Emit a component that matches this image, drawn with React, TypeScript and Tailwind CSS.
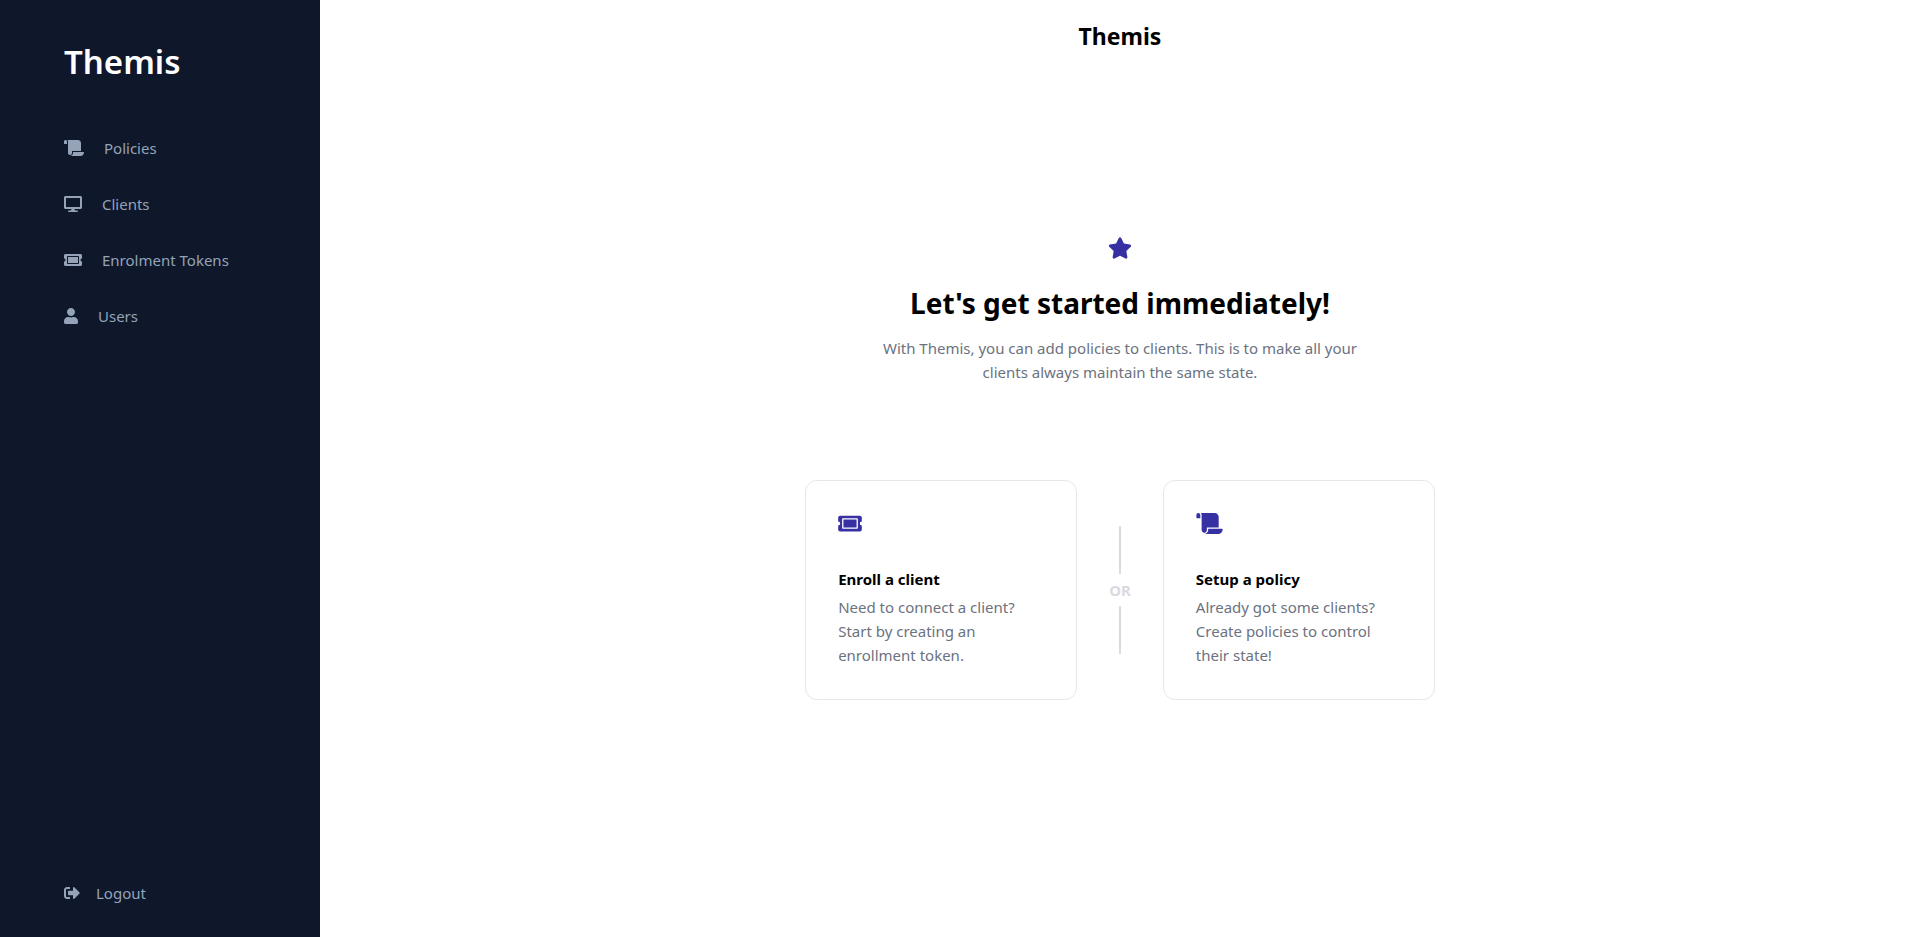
import type { IconType } from 'react-icons';
import { FaDesktop, FaScroll, FaSignOutAlt, FaStar, FaTicketAlt, FaUser } from 'react-icons/fa';

type NavItem = { label: string; icon: IconType; iconClass: string };

const navItems: NavItem[] = [
  { label: 'Policies', icon: FaScroll, iconClass: 'h-4 w-5' },
  { label: 'Clients', icon: FaDesktop, iconClass: 'h-4 w-[18px]' },
  { label: 'Enrolment Tokens', icon: FaTicketAlt, iconClass: 'h-4 w-[18px]' },
  { label: 'Users', icon: FaUser, iconClass: 'h-4 w-[14px]' },
];

function Sidebar() {
  return (
    <aside className="flex w-80 shrink-0 flex-col bg-[#0f172a] px-16 py-8 text-[#94a3b8]">
      <h1 className="mt-2 text-[33px] leading-[44px] font-semibold text-white">Themis</h1>
      <nav className="mt-[52px]">
        <ul className="flex flex-col gap-8">
          {navItems.map(({ label, icon: Icon, iconClass }) => (
            <li key={label}>
              <a href="#" className="flex items-center gap-5">
                <Icon className={iconClass} aria-hidden="true" />
                {label}
              </a>
            </li>
          ))}
        </ul>
      </nav>
      <button type="button" className="mt-auto flex items-center gap-4">
        <FaSignOutAlt className="h-4 w-4" aria-hidden="true" />
        Logout
      </button>
    </aside>
  );
}

type ActionCardProps = { title: string; text: string; icon: IconType; iconClass: string };

function ActionCard({ title, text, icon: Icon, iconClass }: ActionCardProps) {
  return (
    <a href="#" className="block w-68 rounded-xl border border-[#e5e7eb] p-8">
      <div className="mb-8 flex h-[22px] items-start text-[#3730a3]">
        <Icon className={iconClass} aria-hidden="true" />
      </div>
      <h3 className="font-bold">{title}</h3>
      <p className="mt-1 text-[#6b7280]">{text}</p>
    </a>
  );
}

function OrDivider() {
  return (
    <div className="flex flex-col items-center justify-center px-8 font-bold text-[#d9dadf]">
      <div className="h-12 w-0.5 bg-[#d9dadf]" />
      <span className="py-1">OR</span>
      <div className="h-12 w-0.5 bg-[#d9dadf]" />
    </div>
  );
}

export default function App() {
  return (
    <div className="flex min-h-screen bg-white font-['Noto_Sans','Open_Sans',sans-serif] text-[15px] leading-6 text-black">
      <Sidebar />
      <div className="grid flex-1 grid-rows-[1fr_auto_1fr] justify-items-center">
        <header className="pt-5">
          <h2 className="text-[23px] leading-8 font-bold">Themis</h2>
        </header>
        <main className="flex flex-col items-center">
          <FaStar className="h-[22px] w-6 text-[#3730a3]" aria-hidden="true" />
          <h2 className="mt-6 text-[28px] leading-10 font-bold">Let&apos;s get started immediately!</h2>
          <p className="mt-[13px] w-[512px] text-center text-[#6b7280]">
            With Themis, you can add policies to clients. This is to make all your clients always maintain the same
            state.
          </p>
          <div className="mt-24 flex">
            <ActionCard
              title="Enroll a client"
              text="Need to connect a client? Start by creating an enrollment token."
              icon={FaTicketAlt}
              iconClass="h-[21px] w-6"
            />
            <OrDivider />
            <ActionCard
              title="Setup a policy"
              text="Already got some clients? Create policies to control their state!"
              icon={FaScroll}
              iconClass="h-[21px] w-[27px]"
            />
          </div>
        </main>
      </div>
    </div>
  );
}
